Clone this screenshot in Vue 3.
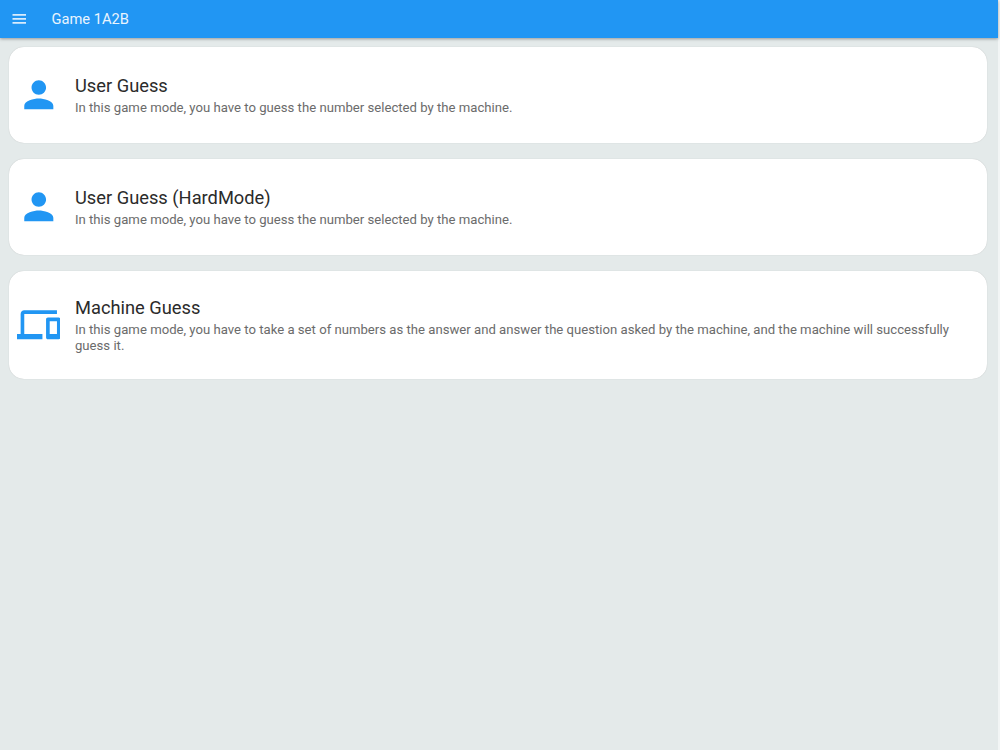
<template>
  <div class="page">
    <header class="app-bar">
      <svg class="menu" viewBox="0 0 14 12">
        <path d="M0.5 1h13.5v1.8H0.5zM0.5 5h13.5v1.8H0.5zM0.5 9h13.5v1.8H0.5z" />
      </svg>
      <h1>Game 1A2B</h1>
    </header>
    <main class="modes">
      <div class="card" v-for="mode in modes" :key="mode.id" :class="{ tall: mode.id === 3 }">
        <svg class="icon" viewBox="0 0 24 24">
          <path :d="icons[mode.icon]" />
        </svg>
        <div class="text">
          <h2>{{ mode.name }}</h2>
          <p>{{ mode.description }}</p>
        </div>
      </div>
    </main>
  </div>
</template>

<script setup>
const icons = {
  person: 'M12 12c2.21 0 4-1.79 4-4s-1.79-4-4-4-4 1.79-4 4 1.79 4 4 4zm0 2c-2.67 0-8 1.34-8 4v2h16v-2c0-2.66-5.33-4-8-4z',
  devices: 'M4 6h18V4H4c-1.1 0-2 .9-2 2v11H0v3h14v-3H4V6zm19 2h-6c-.55 0-1 .45-1 1v10c0 .55.45 1 1 1h6c.55 0 1-.45 1-1V9c0-.55-.45-1-1-1zm-1 9h-4v-7h4v7z',
}

const modes = [
  {
    id: 1,
    icon: 'person',
    name: 'User Guess',
    description: 'In this game mode, you have to guess the number selected by the machine.',
  },
  {
    id: 2,
    icon: 'person',
    name: 'User Guess (HardMode)',
    description: 'In this game mode, you have to guess the number selected by the machine.',
  },
  {
    id: 3,
    icon: 'devices',
    name: 'Machine Guess',
    description: 'In this game mode, you have to take a set of numbers as the answer and answer the question asked by the machine, and the machine will successfully guess it.',
  },
]
</script>

<style>
body {
  background: #f2f5f5;
}
</style>

<style scoped>
.page {
  width: 998px;
  min-height: 750px;
  background: #e4eaea;
  font-family: Roboto, sans-serif;
}
.app-bar {
  display: flex;
  align-items: center;
  height: 38px;
  padding-left: 12px;
  background: #2196f3;
  box-shadow: 0 1px 3px rgba(0, 0, 0, 0.35);
}
.menu {
  width: 14px;
  height: 12px;
  margin-top: -1px;
  fill: #d8ecfd;
}
h1 {
  margin: -1px 0 0 25.4px;
  color: #e9f4fe;
  font-size: 14.7px;
  font-weight: 400;
  line-height: 20px;
}
.modes {
  display: flex;
  flex-direction: column;
  gap: 16.7px;
  padding: 9px 11px 0 9px;
}
.card {
  display: flex;
  align-items: center;
  box-sizing: border-box;
  height: 95.5px;
  padding: 0 30px 0 7.6px;
  border-radius: 15px;
  background: #fff;
  box-shadow: 0 0 1px rgba(0, 0, 0, 0.22);
}
.card.tall {
  height: 107.5px;
}
.icon {
  flex: none;
  width: 43.6px;
  height: 43.6px;
  fill: #2196f3;
}
.text {
  margin-left: 14.8px;
}
h2 {
  margin: 0;
  color: #2b2b2b;
  font-size: 18.3px;
  font-weight: 400;
  line-height: 24px;
}
p {
  margin: 2px 0 0;
  color: #6b6b6b;
  font-size: 13.15px;
  line-height: 16px;
}
</style>
